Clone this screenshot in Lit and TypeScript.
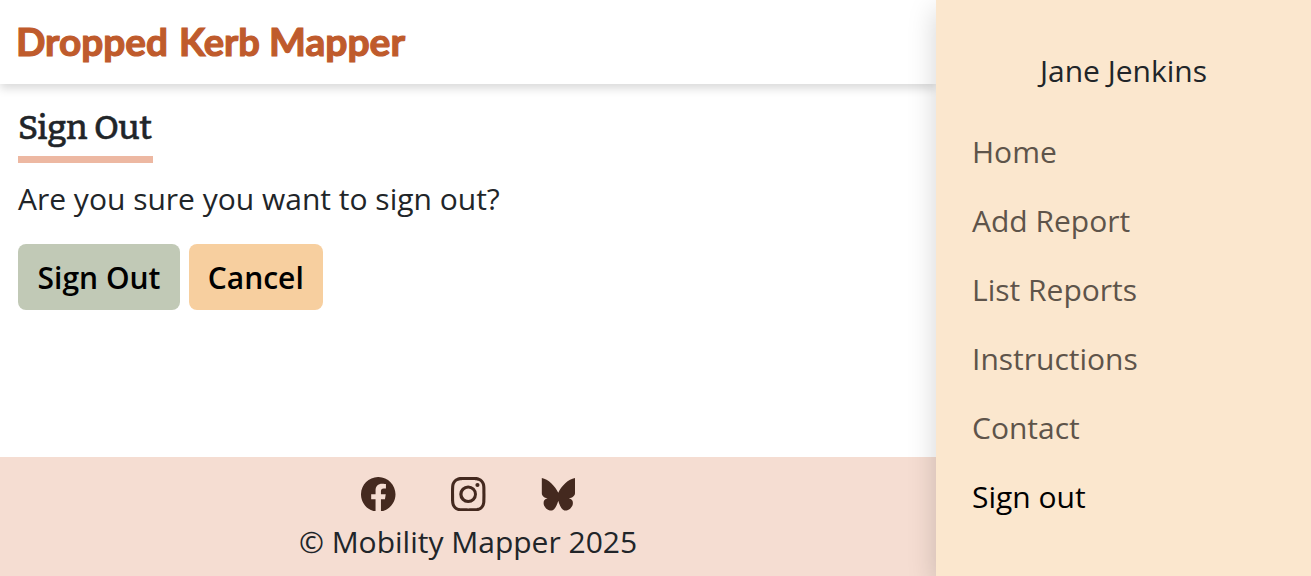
import { LitElement, html, css } from "lit";
import { customElement, state } from "lit/decorators.js";

@customElement("app-root")
export class AppRoot extends LitElement {
  static styles = css`
    :host {
      display: flex;
      width: 100%;
      height: 576px;
      overflow: hidden;
      font-family: "Open Sans", sans-serif;
      font-size: 30px;
      line-height: 45px;
      color: #212529;
      background: #fff;
    }
    * { box-sizing: border-box; }
    .page { flex: 1; min-width: 0; display: flex; flex-direction: column; }
    header {
      height: 84px;
      flex: none;
      padding: 18px 15px;
      box-shadow: 0 4.5px 9px rgba(0, 0, 0, 0.15);
    }
    .brand svg { display: block; overflow: visible; }
    .brand text {
      font-family: "Lato", sans-serif;
      font-weight: 700;
      font-size: 38.5px;
      fill: #bf5b2c;
      stroke: #bf5b2c;
      stroke-width: 1.2px;
    }
    main { flex: 1; padding: 21px 18px 0; }
    h1 {
      margin: 0;
      width: 135px;
      height: 58px;
      border-bottom: 7px solid #edb8a2;
      font-family: "Bitter", "Noto Serif", "DejaVu Serif", serif;
      font-weight: 500;
      font-size: 34px;
      line-height: 44px;
    }
    h1 svg { display: block; overflow: visible; }
    h1 text { fill: currentColor; stroke: currentColor; stroke-width: 0.5px; }
    p { margin: 13px 0 22.5px; }
    .actions { display: flex; gap: 8.5px; }
    button {
      height: 66px;
      border: 0;
      border-radius: 8px;
      padding: 2px 0 0;
      font: 600 30px/45px "Open Sans", sans-serif;
      color: #000;
    }
    .confirm { width: 162px; background: #c1c9b6; }
    .cancel { width: 134.5px; background: #f7cf9f; }
    footer {
      height: 119.5px;
      flex: none;
      padding-top: 20px;
      background: #f5ddd2;
      text-align: center;
    }
    .social { display: flex; justify-content: center; gap: 55.5px; height: 42.5px; padding-left: 1px; color: #44291f; }
    .social svg { width: 34.5px; height: 34.5px; fill: currentColor; }
    aside {
      width: 375px;
      flex: none;
      padding: 48px 36px 0;
      background: #fbe7ce;
      box-shadow: 0 9px 27px rgba(0, 0, 0, 0.175);
      z-index: 1;
    }
    .user { text-align: center; }
    nav { display: flex; flex-direction: column; gap: 24px; margin-top: 36px; }
    nav a { color: #5e544a; }
    nav a.active { color: #000; }
  `;

  @state() private links = ["Home", "Add Report", "List Reports", "Instructions", "Contact", "Sign out"];

  render() {
    return html`
      <div class="page">
        <header>
          <div class="brand">
            <svg width="400" height="50"><text y="38"><tspan x="1" textLength="152" lengthAdjust="spacingAndGlyphs">Dropped</tspan> <tspan x="164" textLength="81" lengthAdjust="spacingAndGlyphs">Kerb</tspan> <tspan x="254" textLength="136" lengthAdjust="spacingAndGlyphs">Mapper</tspan></text></svg>
          </div>
        </header>
        <main>
          <h1>
            <svg width="134" height="44"><text x="0" y="34" textLength="134" lengthAdjust="spacingAndGlyphs">Sign Out</text></svg>
          </h1>
          <p>Are you sure you want to sign out?</p>
          <div class="actions">
            <button class="confirm">Sign Out</button>
            <button class="cancel">Cancel</button>
          </div>
        </main>
        <footer>
          <div class="social">
            <svg viewBox="0 0 16 16"><path d="M16 8.049c0-4.446-3.582-8.05-8-8.05C3.58 0-.002 3.603-.002 8.05c0 4.017 2.926 7.347 6.75 7.951v-5.625h-2.03V8.05H6.75V6.275c0-2.017 1.195-3.131 3.022-3.131.876 0 1.791.157 1.791.157v1.98h-1.009c-.993 0-1.303.621-1.303 1.258v1.51h2.218l-.354 2.326H9.25V16c3.824-.604 6.75-3.934 6.75-7.951"/></svg>
            <svg viewBox="0 0 16 16"><path d="M8 0C5.829 0 5.556.01 4.703.048 3.85.088 3.269.222 2.76.42a3.9 3.9 0 0 0-1.417.923A3.9 3.9 0 0 0 .42 2.76C.222 3.268.087 3.85.048 4.7.01 5.555 0 5.827 0 8.001c0 2.172.01 2.444.048 3.297.04.852.174 1.433.372 1.942.205.526.478.972.923 1.417.444.445.89.719 1.416.923.51.198 1.09.333 1.942.372C5.555 15.99 5.827 16 8 16s2.444-.01 3.298-.048c.851-.04 1.434-.174 1.943-.372a3.9 3.9 0 0 0 1.416-.923c.445-.445.718-.891.923-1.417.197-.509.332-1.09.372-1.942C15.99 10.445 16 10.173 16 8s-.01-2.445-.048-3.299c-.04-.851-.175-1.433-.372-1.941a3.9 3.9 0 0 0-.923-1.417A3.9 3.9 0 0 0 13.24.42c-.51-.198-1.092-.333-1.943-.372C10.443.01 10.172 0 7.998 0zm-.717 1.442h.718c2.136 0 2.389.007 3.232.046.78.035 1.204.166 1.486.275.373.145.64.319.92.599s.453.546.598.92c.11.281.24.705.275 1.485.039.843.047 1.096.047 3.231s-.008 2.389-.047 3.232c-.035.78-.166 1.203-.275 1.485a2.5 2.5 0 0 1-.599.919c-.28.28-.546.453-.92.598-.28.11-.704.24-1.485.276-.843.038-1.096.047-3.232.047s-2.39-.009-3.233-.047c-.78-.036-1.203-.166-1.485-.276a2.5 2.5 0 0 1-.92-.598 2.5 2.5 0 0 1-.6-.92c-.109-.281-.24-.705-.275-1.485-.038-.843-.046-1.096-.046-3.233s.008-2.388.046-3.231c.036-.78.166-1.204.276-1.486.145-.373.319-.64.599-.92s.546-.453.92-.598c.282-.11.705-.24 1.485-.276.738-.034 1.024-.044 2.515-.045zm4.988 1.328a.96.96 0 1 0 0 1.92.96.96 0 0 0 0-1.92m-4.27 1.122a4.109 4.109 0 1 0 0 8.217 4.109 4.109 0 0 0 0-8.217m0 1.441a2.667 2.667 0 1 1 0 5.334 2.667 2.667 0 0 1 0-5.334"/></svg>
            <svg viewBox="0 0 34 34"><path d="M.8 1C7 2 14 9 17 15.500C20 9 27 2 33.500 1V16C33.500 18.500 31 20.500 27.500 21C31.500 22 32 25 31 28C29 32 25.500 33.500 23 33C19.500 31.500 18 27 17 23.500C16 27 14.500 31.500 11 33C8.500 33.500 5 32 3 28C2 25 2.500 22 6.500 21C3 20.500 .8 18.500 .8 16Z"/></svg>
          </div>
          <div>© Mobility Mapper 2025</div>
        </footer>
      </div>
      <aside>
        <div class="user">Jane Jenkins</div>
        <nav>${this.links.map((l) => html`<a class=${l === "Sign out" ? "active" : ""}>${l}</a>`)}</nav>
      </aside>
    `;
  }
}
